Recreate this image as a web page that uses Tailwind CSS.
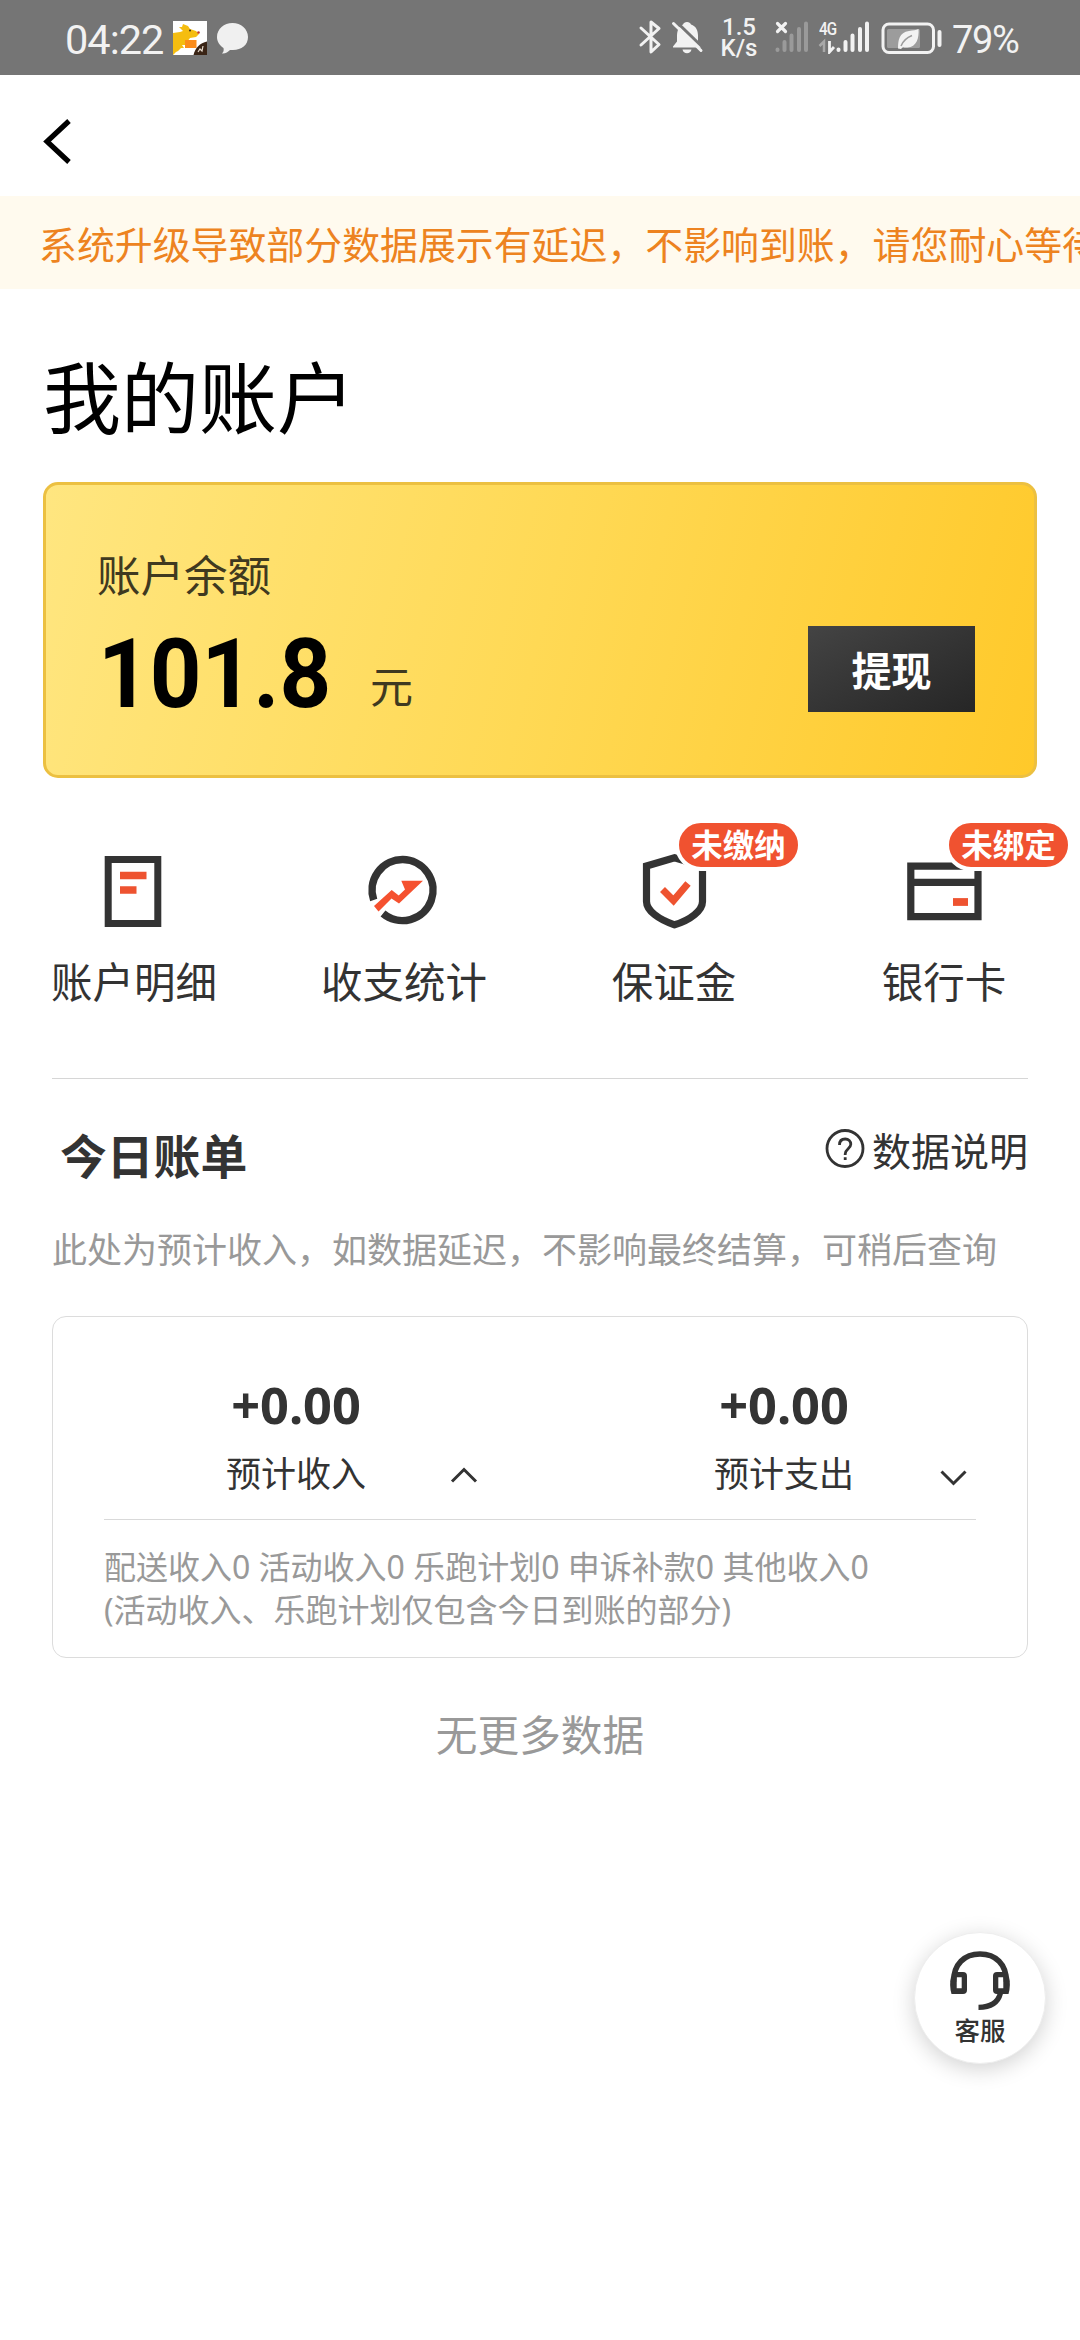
<!DOCTYPE html>
<html lang="zh-CN">
<head>
<meta charset="utf-8">
<title>我的账户</title>
<script src="https://cdn.jsdelivr.net/npm/@tailwindcss/browser@4"></script>
</head>
<body class="bg-white">
<div class="relative w-[1080px] h-[2340px] overflow-hidden bg-white text-[#333] font-['Noto_Sans_CJK_SC',sans-serif]">

  <!-- status bar -->
  <header class="flex h-[75px] bg-[#757575] text-[#f2f2f2] font-[Roboto,sans-serif]">
    <div class="w-[108px] ml-[65px] pt-[15px] text-[41.500px] leading-[50px] tracking-[-1px] whitespace-nowrap">04:22</div>
    <svg class="mt-[21px] w-[34px] h-[34px]" viewBox="0 0 34 34">
      <rect width="34" height="34" fill="#fff"/>
      <path d="M0 12l7-1 3-1-4-4 3 0 1-3 5 2 2 3 6 2 3 3-3 3-6 1-3 4v3l-5 0 2 3-3 0-3 3-2 1-3 3z" fill="#f5bd10"/>
      <circle cx="17" cy="9.500" r="1" fill="#3b2a10"/>
      <circle cx="25.500" cy="11.500" r="1.300" fill="#c0392b"/>
      <rect x="12" y="19" width="11.500" height="8" fill="#fb8c1a"/>
      <path d="M34 20.500V34H20.500C22 27 27 22 34 20.500z" fill="#3a2415"/>
      <path d="M25 31l2-3 2 2 1-5" fill="none" stroke="#e8ddd0" stroke-width="1.200"/>
    </svg>
    <svg class="ml-[10px] mt-[23px] w-[31px] h-[31px]" viewBox="0 0 31 31">
      <path d="M15.500 0C24 0 31 6 31 14s-6.500 13-15 13c-1 0-2 0-3 0-2 2-5 4-8 3.500 1.500-1.500 2-3 1.500-5.500C2.500 22.500 0 18.500 0 14 0 6 7 0 15.500 0z" fill="#f0f0f0"/>
    </svg>
    <svg class="ml-[390px] mt-[18px] w-[24px] h-[38px]" viewBox="638 18 24 38" fill="none" stroke="#f2f2f2" stroke-width="3" stroke-linejoin="round" stroke-linecap="round">
      <path d="M641 28l18 16.500-8 7.500V22l8 6.500L641 45"/>
    </svg>
    <svg class="ml-[9px] mt-[20px] w-[34px] h-[36px]" viewBox="671 20 34 36">
      <path d="M687 22c2 0 3.500 1 4 2.500 5 1.500 7 6 7 11v6l3 5v1H673v-1l4-5v-6c0-5 2-9.500 6-11 .5-1.500 2-2.500 4-2.500zM682.500 49.500h9c-.5 2.500-2.300 3.800-4.500 3.800s-4-1.300-4.500-3.800z" fill="#f2f2f2"/>
      <path d="M675 20.500L704 48.500" stroke="#757575" stroke-width="3"/>
      <path d="M673.500 23.500L701 50.500" stroke="#f2f2f2" stroke-width="3" stroke-linecap="round"/>
    </svg>
    <div class="w-[44px] ml-[12px] pt-[17px] text-center text-[24px] leading-[21px] font-medium">1.5<br>K/s</div>
    <svg class="ml-[13px] mt-[20px] w-[36px] h-[34px]" viewBox="774 20 36 34">
      <path d="M777.500 23.500l8 8m0-8l-8 8" stroke="#f2f2f2" stroke-width="3.200" stroke-linecap="round"/>
      <g stroke="#9a9a9a" stroke-width="4" stroke-linecap="round"><path d="M777.500 49.500v.5M784.500 42v8M791.500 35.500v14.500M799 29v21M806 23.500V50"/></g>
    </svg>
    <div class="relative ml-[8px] mt-[20px] w-[54px] h-[34px]">
      <svg class="w-[54px] h-[34px]" viewBox="818 20 54 34">
        <path d="M819.500 46l4.500-4.500v10.500" stroke="#a8a8a8" stroke-width="2.500" fill="none"/>
        <path d="M829.500 41v11l4.500-5" stroke="#f2f2f2" stroke-width="2.800" fill="none"/>
        <g stroke="#f2f2f2" stroke-width="4" stroke-linecap="round"><path d="M838.500 49.500v.5M845.500 42v8M852.500 35.500v14.500M860 29v21M867 23.500V50"/></g>
      </svg>
      <span class="absolute left-[1px] top-0 text-[19px] leading-[18px] font-medium tracking-[-1px] origin-left scale-x-[.8]">4G</span>
    </div>
    <svg class="ml-[8px] mt-[20px] w-[64px] h-[36px]" viewBox="880 20 64 36">
      <rect x="883" y="24" width="50.500" height="28.500" rx="6" fill="none" stroke="#f2f2f2" stroke-width="3"/>
      <rect x="887" y="29" width="33" height="19" rx="1.500" fill="#9c9c9c"/>
      <path d="M898 48.500c0-8 1-16 11-17.500 4-.6 7-.8 9.500-2 .8 9-2 18-11 18.500-2 .1-3.500 0-4.500-.6l-2 2z" fill="#f2f2f2"/>
      <path d="M901 46c2-5 6-8.500 11-10.500" stroke="#9c9c9c" stroke-width="1.500" fill="none"/>
      <rect x="937.500" y="30" width="4" height="17" rx="2" fill="#f2f2f2"/>
    </svg>
    <div class="ml-[8px] pt-[15px] text-[38px] leading-[50px] tracking-[-1.300px]">79%</div>
  </header>

  <!-- navigation -->
  <nav class="h-[121px] pt-[40px] pl-[40px]">
    <svg class="w-[34px] h-[54px]" viewBox="40 115 34 54" fill="none" stroke="#000" stroke-width="5.200"><path d="M69 121L47 141.500 69 162"/></svg>
  </nav>

  <!-- notice -->
  <div class="h-[93px] pl-[39px] bg-[#fffaee] text-[#ed8320] text-[37.900px] leading-[93px] whitespace-nowrap overflow-hidden">系统升级导致部分数据展示有延迟，不影响到账，请您耐心等待</div>

  <h1 class="h-[193px] pt-[55px] pl-[43px] text-[78px] leading-[100px] text-black">我的账户</h1>

  <!-- balance card -->
  <section class="flex justify-between mx-[43px] h-[296px] rounded-[15px] border-[3px] border-[#ecc041] bg-[linear-gradient(104deg,#ffe680_0%,#ffd955_50%,#ffc92a_100%)] pl-[51px] pr-[59px]">
    <div class="pt-[64px]">
      <div class="text-[43.500px] leading-[50px] text-[#3f3920]">账户余额</div>
      <div class="flex items-start h-[100px] mt-[20px]">
        <div class="w-[273px] pl-px"><span class="inline-block origin-left scale-x-[.93] font-[Roboto,sans-serif] font-bold text-[97px] leading-[110px] text-black">101.8</span></div>
        <span class="pt-[40px] text-[43px] leading-[50px] text-[#3f3920]">元</span>
      </div>
    </div>
    <button class="mt-[141px] w-[167px] h-[86px] pb-[1px] bg-linear-to-br from-[#444] to-[#262626] text-white font-bold text-[40px] leading-[50px]">提现</button>
  </section>

  <!-- shortcuts -->
  <div class="grid grid-cols-4 -ml-px w-[1080px] h-[300px] text-[41.500px] leading-[50px]">
    <div class="flex flex-col items-center pt-[73px] gap-[24px]">
      <svg class="w-[80px] h-[80px]" viewBox="94 851 80 80"><rect x="108.200" y="859.500" width="49.600" height="64" fill="none" stroke="#333" stroke-width="7"/><path d="M120 875.500h26.500M120 890h16.500" stroke="#ee5330" stroke-width="7.500"/></svg>
      <span>账户明细</span>
    </div>
    <div class="flex flex-col items-center pt-[73px] gap-[24px]">
      <svg class="w-[80px] h-[80px]" viewBox="364 851 80 80"><path d="M373.700 900A30.500 30.500 0 1 1 383 913.500" fill="none" stroke="#333" stroke-width="7.500"/><path d="M374 906L391.700 890l7 5.500 6.300-6L401.300 880.700H423L399 903.500 391.500 898.500 378.500 911.500z" fill="#f5512f"/></svg>
      <span>收支统计</span>
    </div>
    <div class="relative flex flex-col items-center pt-[73px] gap-[24px]">
      <svg class="w-[80px] h-[80px]" viewBox="634 851 80 80" fill="none"><path d="M674.500 857.800L702.500 866v35.500c0 9-12 18.500-28 23.300-16-5.300-28-14.300-28-23.300V866z" stroke="#333" stroke-width="7.200"/><path d="M662.500 889.500l11 11 14.500-17" stroke="#ee5330" stroke-width="7"/></svg>
      <span>保证金</span>
      <b class="absolute left-[136px] top-[41px] h-[52px] w-[127px] rounded-full border-4 border-white bg-[#f05230] text-white text-center text-[31.500px] leading-[40px]">未缴纳</b>
    </div>
    <div class="relative flex flex-col items-center pt-[73px] gap-[24px]">
      <svg class="w-[80px] h-[80px]" viewBox="904 851 80 80" fill="none"><path d="M910.800 866.200h67.200v50.500h-67.200zM911 882.300h67" stroke="#333" stroke-width="7.200"/><path d="M953 902h15" stroke="#ee5330" stroke-width="7.800"/></svg>
      <span>银行卡</span>
      <b class="absolute left-[136px] top-[41px] h-[52px] w-[127px] rounded-full border-4 border-white bg-[#f05230] text-white text-center text-[31.500px] leading-[40px]">未绑定</b>
    </div>
  </div>

  <!-- today's bill -->
  <section class="mx-[52px] border-t border-[#d6d6d6]">
    <div class="flex justify-between pl-[8px] h-[140px]">
      <h2 class="pt-[50px] text-[46.800px] leading-[50px] font-bold">今日账单</h2>
      <div class="flex pt-[45px] text-[39px] leading-[50px]">
        <svg class="mt-[4px] mr-[6px] w-[42px] h-[42px]" viewBox="824 1128 42 42" fill="none" stroke="#333" stroke-width="2.800"><circle cx="845" cy="1148.500" r="18"/><path d="M839.500 1145c0-3.800 2.300-6 5.700-6s5.600 2.200 5.600 5.300c0 4.200-5.600 4.800-5.600 9.700v1M845.200 1157.200v2.800"/></svg>
        <span>数据说明</span>
      </div>
    </div>
    <p class="h-[97px] pt-[4px] text-[35px] leading-[50px] text-[#999] whitespace-nowrap">此处为预计收入，如数据延迟，不影响最终结算，可稍后查询</p>
    <div class="h-[342px] rounded-[14px] border border-[#dcdcdc] px-[51px]">
      <div class="flex h-[203px] border-b border-[#d9d9d9]">
        <div class="relative w-[488px] pr-[104px] pt-[60px] text-center">
          <div class="font-['Noto_Sans',sans-serif] text-[50.500px] leading-[56px] font-bold">+0.00</div>
          <div class="pt-[14px] text-[35px] leading-[50px]">预计收入</div>
          <svg class="absolute left-[344px] top-[146px] w-[32px] h-[24px]" viewBox="448 1463 32 24" fill="none" stroke="#333" stroke-width="3"><path d="M452 1481.500L464 1469.500 476 1481.500"/></svg>
        </div>
        <div class="relative w-[384px] pt-[60px] text-center">
          <div class="font-['Noto_Sans',sans-serif] text-[50.500px] leading-[56px] font-bold">+0.00</div>
          <div class="pt-[14px] text-[35px] leading-[50px]">预计支出</div>
          <svg class="absolute left-[346px] top-[148px] w-[32px] h-[24px]" viewBox="938 1465 32 24" fill="none" stroke="#333" stroke-width="3"><path d="M941.500 1471.500L953.500 1483.500 965.500 1471.500"/></svg>
        </div>
      </div>
      <p class="pt-[25px] font-['Noto_Sans','Noto_Sans_CJK_SC',sans-serif] text-[32px] leading-[43px] text-[#999] whitespace-nowrap">配送收入0 活动收入0 乐跑计划0 申诉补款0 其他收入0<br>(活动收入、乐跑计划仅包含今日到账的部分)</p>
    </div>
    <p class="pt-[50px] text-center text-[41.700px] leading-[50px] text-[#999]">无更多数据</p>
  </section>

  <!-- floating support button -->
  <div class="absolute left-[914px] top-[1932px] w-[132px] h-[132px] rounded-full bg-white border border-[#eee] shadow-[0_5px_22px_rgba(0,0,0,0.18)] flex flex-col items-center">
    <svg class="mt-[15px] w-[70px] h-[66px]" viewBox="944 1948 70 66">
      <path d="M952.500 1982c0-18 11-28 26.500-28s26.500 10 26.500 28" fill="none" stroke="#333" stroke-width="5.500"/>
      <path fill-rule="evenodd" fill="#333" d="M950 1977l5-5h7q4 0 4 4v14q0 4-4 4h-11.500q-2.500-9-.5-17zM955.700 1977.300v11h5v-11zM1008 1977l-5-5h-7q-4 0-4 4v14q0 4 4 4h11.500q2.500-9 .5-17zM1002.300 1977.300v11h-5v-11z"/>
      <path d="M999.500 1993c-2 8-8 14.300-22 14.300" fill="none" stroke="#333" stroke-width="5.200"/>
    </svg>
    <span class="mt-0 text-[25.500px] leading-[30px] font-medium">客服</span>
  </div>
</div>
</body>
</html>
